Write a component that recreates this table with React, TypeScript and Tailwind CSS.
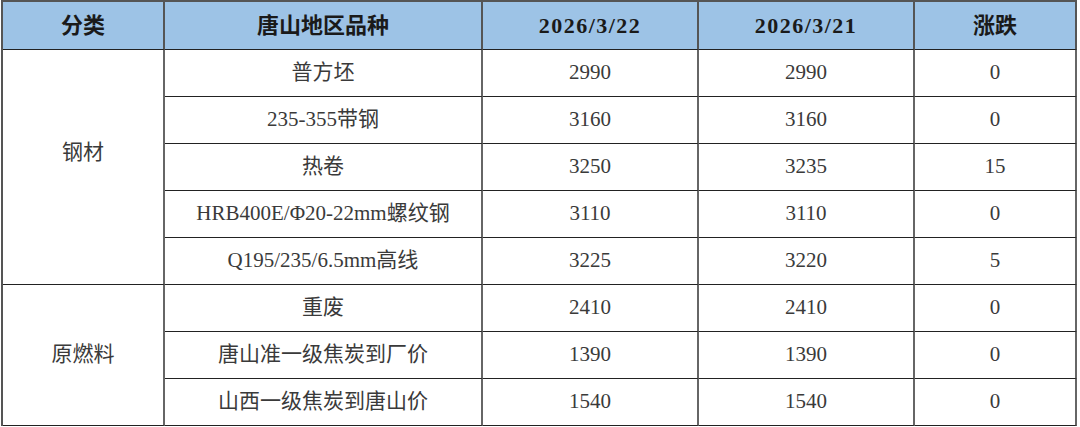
import React from "react";

const rows: { name: string; a: string; b: string; c: string }[] = [
  { name: "普方坯", a: "2990", b: "2990", c: "0" },
  { name: "235-355带钢", a: "3160", b: "3160", c: "0" },
  { name: "热卷", a: "3250", b: "3235", c: "15" },
  { name: "HRB400E/Φ20-22mm螺纹钢", a: "3110", b: "3110", c: "0" },
  { name: "Q195/235/6.5mm高线", a: "3225", b: "3220", c: "5" },
  { name: "重废", a: "2410", b: "2410", c: "0" },
  { name: "唐山准一级焦炭到厂价", a: "1390", b: "1390", c: "0" },
  { name: "山西一级焦炭到唐山价", a: "1540", b: "1540", c: "0" },
];

const cell =
  "flex items-center justify-center border-r-2 border-r-[#666] border-b border-b-[#222] text-[21px] text-[#3a3a3a]";
const head =
  "flex items-center justify-center border-r-2 border-r-[#555] border-b border-b-[#222] bg-[#9dc3e6] text-[22px] font-bold text-[#1a1a1a]";

export default function App() {
  return (
    <div className="w-[1080px] h-[427px] bg-white overflow-hidden">
      <div
        className="ml-px grid w-[1076px] grid-cols-[162px_318px_216px_216px_162px] grid-rows-[48px_repeat(8,47px)] border-l-2 border-t-2 border-l-[#555] border-t-[#555]"
        style={{ fontFamily: '"Liberation Serif", "Noto Sans CJK SC", serif' }}
      >
        <div className={head}>分类</div>
        <div className={head}>唐山地区品种</div>
        <div className={head}>
          <span className="tracking-[1.5px]">2026/3/22</span>
        </div>
        <div className={head}>
          <span className="tracking-[1.5px]">2026/3/21</span>
        </div>
        <div className={head}>涨跌</div>

        <div className={`${cell} row-span-5 pb-[28px]`}>钢材</div>
        {rows.slice(0, 5).map((r) => (
          <React.Fragment key={r.name}>
            <div className={cell}>{r.name}</div>
            <div className={cell}>{r.a}</div>
            <div className={cell}>{r.b}</div>
            <div className={cell}>{r.c}</div>
          </React.Fragment>
        ))}
        <div className={`${cell} row-span-3 col-start-1 row-start-7`}>原燃料</div>
        {rows.slice(5).map((r) => (
          <React.Fragment key={r.name}>
            <div className={`${cell} col-start-2`}>{r.name}</div>
            <div className={cell}>{r.a}</div>
            <div className={cell}>{r.b}</div>
            <div className={cell}>{r.c}</div>
          </React.Fragment>
        ))}
      </div>
    </div>
  );
}
